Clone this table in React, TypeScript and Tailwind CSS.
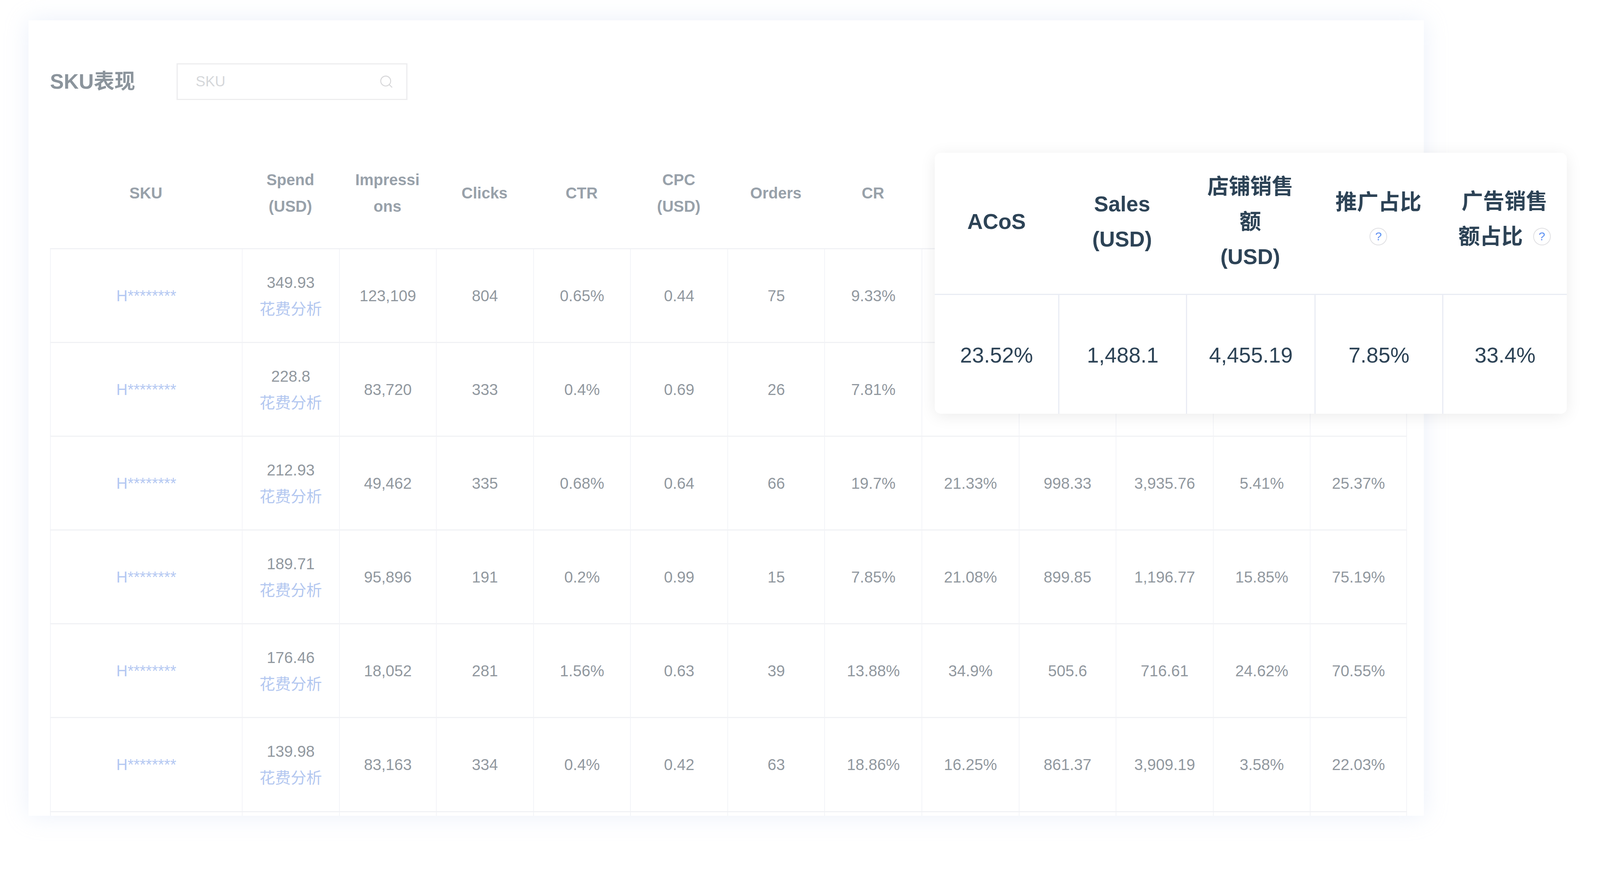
import { Search } from 'lucide-react';

const headers: string[][] = [
  ['SKU'],
  ['Spend', '(USD)'],
  ['Impressi', 'ons'],
  ['Clicks'],
  ['CTR'],
  ['CPC', '(USD)'],
  ['Orders'],
  ['CR'],
  ['ACoS'],
  ['Sales', '(USD)'],
  ['店铺销售', '额', '(USD)'],
  ['推广占比'],
  ['广告销售', '额占比'],
];

const rows = [
  ['349.93', '123,109', '804', '0.65%', '0.44', '75', '9.33%', '23.52%', '1,488.1', '4,455.19', '7.85%', '33.4%'],
  ['228.8', '83,720', '333', '0.4%', '0.69', '26', '7.81%', '18.64%', '1,227.4', '3,102.55', '6.12%', '39.56%'],
  ['212.93', '49,462', '335', '0.68%', '0.64', '66', '19.7%', '21.33%', '998.33', '3,935.76', '5.41%', '25.37%'],
  ['189.71', '95,896', '191', '0.2%', '0.99', '15', '7.85%', '21.08%', '899.85', '1,196.77', '15.85%', '75.19%'],
  ['176.46', '18,052', '281', '1.56%', '0.63', '39', '13.88%', '34.9%', '505.6', '716.61', '24.62%', '70.55%'],
  ['139.98', '83,163', '334', '0.4%', '0.42', '63', '18.86%', '16.25%', '861.37', '3,909.19', '3.58%', '22.03%'],
  ['120.45', '41,208', '212', '0.51%', '0.57', '28', '13.21%', '19.4%', '620.9', '2,410.33', '4.87%', '25.76%'],
];

const summary = ['23.52%', '1,488.1', '4,455.19', '7.85%', '33.4%'];

function Help() {
  return (
    <span className="inline-flex items-center justify-center w-[45px] h-[45px] rounded-full border-2 border-[#e0e0e3] text-[#5b8ff2] text-[30px] font-normal leading-none align-middle">
      ?
    </span>
  );
}

export default function App() {
  return (
    <div className="relative w-screen h-screen overflow-hidden bg-white font-['Liberation_Sans','Noto_Sans_CJK_SC',sans-serif]">
      <div className="pl-[73px] pt-[52px]">
        <div className="w-[3572px] h-[2036px] overflow-hidden bg-white shadow-[0_0_56px_rgba(190,205,240,0.3)] pl-[55px]">
          {/* 标题 + 搜索 */}
          <div className="flex items-center pt-[110px]">
            <h2 className="w-[324px] text-[53px] font-bold text-[#8b949c]">SKU表现</h2>
            <div className="flex items-center justify-between w-[591px] h-[94px] border-[3px] border-[#ededef] pl-[46px] pr-[32px]">
              <span className="text-[37px] text-[#d5d7da]">SKU</span>
              <Search size={38} strokeWidth={1.5} className="text-[#d6d6d8]" />
            </div>
          </div>

          {/* 表格 */}
          <div className="w-[3474px] mt-[97px]">
            <div className="grid grid-cols-[491px_repeat(12,1fr)] h-[282px]">
              {headers.map((lines, i) => (
                <div key={i} className="flex flex-col items-center justify-center text-[40px] leading-[68px] font-bold text-[#98a1aa]">
                  {lines.map((l, j) => (
                    <span key={j}>{l}</span>
                  ))}
                </div>
              ))}
            </div>
            {rows.map((row, r) => (
              <div
                key={r}
                className="grid grid-cols-[491px_repeat(12,1fr)] h-[240.1px] border-t-[3px] border-[#f1f2f5]"
              >
                <div className="flex items-center justify-center border-l-[2px] border-[#f3f4f8] text-[40px] text-[#b4c8f2]">
                  H********
                </div>
                {row.map((v, c) => (
                  <div
                    key={c}
                    className={`flex flex-col items-center justify-center border-l-[2px] border-[#f3f4f8] text-[40px] leading-[68px] text-[#91989f] ${c === 11 ? 'border-r-[2px]' : ''}`}
                  >
                    <span>{v}</span>
                    {c === 0 && <span className="text-[#b3c7f0]">花费分析</span>}
                  </div>
                ))}
              </div>
            ))}
          </div>
        </div>
      </div>

      {/* 浮层汇总卡片 */}
      <div className="absolute left-[2393px] top-[391px] w-[1618px] h-[668px] rounded-[15px] overflow-hidden bg-white shadow-[0_6px_42px_rgba(0,0,0,0.08)] text-[#2d4356]">
        <div className="grid grid-cols-[121fr_125fr_126fr_125fr_122fr] h-[364px] border-b-[3px] border-[#e9ecf4] text-[55px] leading-[90px] font-bold pb-[10px]">
          <div className="flex flex-col items-center justify-center">
            <span>ACoS</span>
          </div>
          <div className="flex flex-col items-center justify-center">
            <span>Sales</span>
            <span>(USD)</span>
          </div>
          <div className="flex flex-col items-center justify-center">
            <span>店铺销售</span>
            <span>额</span>
            <span>(USD)</span>
          </div>
          <div className="flex flex-col items-center justify-center pb-[13px]">
            <span>推广占比</span>
            <span className="flex items-center h-[87px]">
              <Help />
            </span>
          </div>
          <div className="flex flex-col items-center justify-center pb-[13px]">
            <span>广告销售</span>
            <span className="flex items-center gap-[26px]">
              额占比
              <Help />
            </span>
          </div>
        </div>
        <div className="grid grid-cols-[121fr_125fr_126fr_125fr_122fr] h-[304px]">
          {summary.map((v, i) => (
            <div
              key={i}
              className={`flex items-center justify-center text-[55px] pt-[4px] ${i > 0 ? 'border-l-[3px] border-[#e9ecf4]' : ''}`}
            >
              {v}
            </div>
          ))}
        </div>
      </div>
    </div>
  );
}
